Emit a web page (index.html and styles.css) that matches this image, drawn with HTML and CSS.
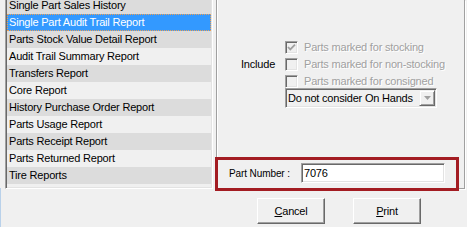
FILE: index.html
```html
<!DOCTYPE html>
<html>
<head>
    <meta charset="utf-8">
    <title>Parts Reports</title>
    <link rel="stylesheet" href="styles.css">
</head>
<body>
    <div class="dialog">
        <div class="report-list">
            <ul class="items">
                <li>Single Part Sales History</li>
                <li class="selected">Single Part Audit Trail Report</li>
                <li>Parts Stock Value Detail Report</li>
                <li>Audit Trail Summary Report</li>
                <li>Transfers Report</li>
                <li>Core Report</li>
                <li>History Purchase Order Report</li>
                <li>Parts Usage Report</li>
                <li>Parts Receipt Report</li>
                <li>Parts Returned Report</li>
                <li>Tire Reports</li>
            </ul>
        </div>

        <div class="side">
            <div class="options-panel">
                <div class="include">
                    <span class="include-label">Include</span>
                    <div class="include-opts">
                        <div class="checks">
                            <label class="check">
                                <span class="box">
                                    <svg width="11" height="11" viewBox="0 0 11 11"><path d="M2 5 L4.3 7.4 L9 2.6" fill="none" stroke="#a0a0a0" stroke-width="1.8"/></svg>
                                </span>
                                Parts marked for stocking
                            </label>
                            <label class="check">
                                <span class="box"></span>
                                Parts marked for non-stocking
                            </label>
                            <label class="check">
                                <span class="box"></span>
                                Parts marked for consigned
                            </label>
                        </div>
                        <div class="combo">
                            <span class="combo-text">Do not consider On Hands</span>
                            <span class="combo-btn">
                                <svg width="7" height="4" viewBox="0 0 7 4"><polygon points="0,0 7,0 3.5,4" fill="#a0a0a0"/></svg>
                            </span>
                        </div>
                    </div>
                </div>

                <div class="part-row">
                    <span class="part-label">Part Number :</span>
                    <div class="textbox">7076</div>
                </div>
            </div>

            <div class="buttons">
                <button class="btn"><u>C</u>ancel</button>
                <button class="btn"><u>P</u>rint</button>
            </div>
        </div>
    </div>
</body>
</html>
```

FILE: styles.css
```css
* {
    margin: 0;
    padding: 0;
    box-sizing: border-box;
}

html, body {
    width: 467px;
    height: 227px;
    overflow: hidden;
}

body {
    font-family: "Liberation Sans", Arial, sans-serif;
    font-size: 11px;
    letter-spacing: -0.2px;
    color: #000;
    background: #f0f0f0 linear-gradient(#b9d1ea, #b9d1ea) 0 188px / 1px 39px no-repeat;
}

.dialog {
    display: flex;
    gap: 3px;
    padding-left: 5px;
}

/* report list */
.report-list {
    width: 208px;
    height: 189px;
    overflow: hidden;
    background: #f0f0f0;
    border: 1px solid;
    border-top: none;
    border-color: #a0a0a0 #fff #fff #a0a0a0;
    padding: 0 1px 1px 1px;
    box-shadow: inset 1px 0 #696969, inset -1px -1px #e3e3e3;
}

.items {
    list-style: none;
    margin-top: -3px;
}

.items li {
    height: 17px;
    line-height: 17px;
    padding-left: 2px;
    white-space: nowrap;
}

.items li:nth-child(odd) {
    background: #dcdcdc;
}

.items li.selected {
    background: #3399ff;
    color: #fff;
    outline: 1px dotted #f0a050;
    outline-offset: -1px;
}

/* right side */
.side {
    width: 249px;
    display: flex;
    flex-direction: column;
}

.options-panel {
    height: 189px;
    border: 1px solid #a0a0a0;
    border-top: none;
    box-shadow: inset 1px 0 #fff, 1px 1px #fff;
    display: flex;
    flex-direction: column;
}

.include {
    display: flex;
    margin-top: 41px;
    padding-left: 24px;
}

.include-label {
    width: 44px;
    margin-top: 17px;
    line-height: 13px;
}

.checks {
    display: flex;
    flex-direction: column;
    gap: 4px;
}

.check {
    display: flex;
    align-items: center;
    gap: 6px;
    height: 13px;
    line-height: 13px;
    color: #a0a0a0;
    text-shadow: 1px 1px #fff;
    white-space: nowrap;
}

.box {
    width: 13px;
    height: 13px;
    display: flex;
    border: 1px solid;
    border-color: #a0a0a0 #fff #fff #a0a0a0;
    box-shadow: inset 1px 1px #696969, inset -1px -1px #e3e3e3;
    background: #f0f0f0;
}

.combo {
    width: 152px;
    height: 20px;
    display: flex;
    align-items: center;
    border: 1px solid;
    border-color: #a0a0a0 #fff #fff #a0a0a0;
    box-shadow: inset 1px 1px #696969, inset -1px -1px #e3e3e3;
    padding: 1px;
    background: #f0f0f0;
}

.combo-text {
    flex: 1;
    padding-left: 1px;
    white-space: nowrap;
}

.combo-btn {
    width: 16px;
    height: 16px;
    display: flex;
    align-items: center;
    justify-content: center;
    border: 1px solid;
    border-color: #f0f0f0 #696969 #696969 #f0f0f0;
    box-shadow: inset 1px 1px #fff, inset -1px -1px #a0a0a0;
}

/* part number, highlighted */
.part-row {
    margin-top: auto;
    margin-left: -2px;
    margin-bottom: -3px;
    width: 244px;
    height: 34px;
    border: 3px solid #a31c22;
    display: flex;
    align-items: center;
    padding: 0 0 2px 11px;
}

.part-label {
    width: 72px;
    font-size: 10px;
    letter-spacing: -0.1px;
}

.textbox {
    width: 144px;
    height: 20px;
    line-height: 18px;
    padding-left: 2px;
    background: #fff;
    border: 1px solid;
    border-color: #a0a0a0 #fff #fff #a0a0a0;
    box-shadow: inset 1px 1px #696969, inset -1px -1px #e3e3e3;
}

.buttons {
    display: flex;
    justify-content: center;
    gap: 28px;
    margin-top: 9px;
    padding-right: 3px;
}

.btn {
    width: 68px;
    height: 26px;
    font: inherit;
    letter-spacing: inherit;
    color: #000;
    background: #f0f0f0;
    border: 1px solid;
    border-color: #fff #696969 #696969 #fff;
    box-shadow: inset -1px -1px #a0a0a0;
}
```
